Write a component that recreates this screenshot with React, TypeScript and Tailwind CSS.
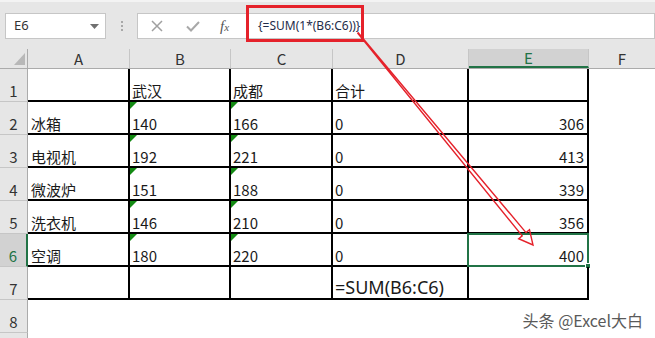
import React from "react";

const colW = ["w-[102px]", "w-[101px]", "w-[102px]", "w-[136px]", "w-[120px]"];

const rows: string[][] = [
  ["", "武汉", "成都", "合计", ""],
  ["冰箱", "140", "166", "0", "306"],
  ["电视机", "192", "221", "0", "413"],
  ["微波炉", "151", "188", "0", "339"],
  ["洗衣机", "146", "210", "0", "356"],
  ["空调", "180", "220", "0", "400"],
  ["", "", "", "=SUM(B6:C6)", ""],
];

function Tri() {
  return (
    <svg className="absolute left-0 top-0" width="7" height="7" viewBox="0 0 7 7">
      <polygon points="0,0 7,0 0,7" fill="#138a13" />
    </svg>
  );
}

function Cell({ r, c, v }: { r: number; c: number; v: string }) {
  const isE = c === 4;
  const hasTri = (c === 1 || c === 2) && r >= 1 && r <= 5;
  const isSel = r === 5 && c === 4;
  const isFormula = v.startsWith("=");
  return (
    <div
      className={`relative ${colW[c]} h-full shrink-0 border-r-2 border-b-2 border-black flex items-end pb-[2px] ${
        isE ? "justify-end pr-[3px]" : c === 0 ? "pl-[3px]" : "pl-[2px]"
      }`}
    >
      {hasTri && <Tri />}
      <span
        className={
          isFormula
            ? "text-[18px] leading-[18px] text-[#1a1a1a] font-['Noto_Sans','Noto_Sans_CJK_SC',sans-serif]"
            : "text-[15px] leading-[15px] text-[#1a1a1a]"
        }
      >
        {v}
      </span>
      {isSel && (
        <div className="absolute left-[-2px] top-[-1px] w-[122px] h-[34px] border-2 border-[#217346]">
          <div className="absolute right-[-4px] bottom-[-4px] w-[6px] h-[6px] bg-[#217346] border border-white" />
        </div>
      )}
    </div>
  );
}

export default function App() {
  const headers = ["A", "B", "C", "D", "E"];
  return (
    <div className="relative w-[655px] h-[338px] overflow-hidden bg-white font-['Noto_Sans_CJK_SC',sans-serif]">
      {/* Toolbar */}
      <div className="h-[49px] bg-[#e6e6e6] border-t-[2px] border-[#f3f3f3] flex items-start pt-[11px]">
        <div className="ml-[5px] w-[101px] h-[26px] bg-white border border-[#c6c6c6] flex items-center justify-between pl-[8px] pr-[6px]">
          <span className="text-[13px] text-[#333] font-['Noto_Sans',sans-serif]">E6</span>
          <svg width="9" height="5" viewBox="0 0 9 5">
            <polygon points="0,0 9,0 4.5,5" fill="#707070" />
          </svg>
        </div>
        <div className="w-[31px] h-[26px] flex flex-col items-center justify-center gap-[2px]">
          <div className="w-[2px] h-[2px] bg-[#a8a8a8]" />
          <div className="w-[2px] h-[2px] bg-[#a8a8a8]" />
          <div className="w-[2px] h-[2px] bg-[#a8a8a8]" />
        </div>
        <div className="w-[110px] h-[26px] bg-white border border-[#c6c6c6] flex items-center pl-[13px]">
          <svg width="12" height="12" viewBox="0 0 12 12">
            <path d="M1 1 L11 11 M11 1 L1 11" stroke="#a0a0a0" strokeWidth="1.5" />
          </svg>
          <svg className="ml-[23px]" width="14" height="11" viewBox="0 0 14 11">
            <path d="M1 5.5 L5 9.5 L13 1" stroke="#a8a8a8" strokeWidth="2" fill="none" />
          </svg>
          <span className="ml-[20px] text-[15px] italic text-[#555] font-['Liberation_Serif',serif] leading-none">
            f<span className="text-[11px]">x</span>
          </span>
        </div>
        <div className="flex-1 h-[26px] bg-white border border-[#c6c6c6] flex items-center pl-[10px]">
          <span className="text-[12px] text-[#1f2d4a] font-['Noto_Sans',sans-serif]">{"{=SUM(1*(B6:C6))}"}</span>
        </div>
      </div>

      {/* Column headers */}
      <div className="flex h-[20px] bg-[#e6e6e6] border-b border-[#ababab]">
        <div className="relative w-[28px] h-full border-r border-[#ababab] shrink-0">
          <svg className="absolute right-[2px] bottom-[3px]" width="11" height="12" viewBox="0 0 11 12">
            <polygon points="11,0 11,12 0,12" fill="#b8b8b8" />
          </svg>
        </div>
        {headers.map((h, i) => (
          <div
            key={h}
            className={`${colW[i]} shrink-0 h-full flex items-center justify-center pt-[1px] text-[15px] border-r border-[#c6c6c6] ${
              i === 4 ? "bg-[#d2d2d2] border-b-2 border-b-[#217346] text-[#217346]" : "text-[#333]"
            }`}
          >
            {h}
          </div>
        ))}
        <div className="flex-1 h-full flex items-center justify-center pt-[1px] text-[15px] text-[#333]">F</div>
      </div>

      {/* Rows */}
      {rows.map((row, r) => (
        <div key={r} className="flex h-[33px]">
          <div
            className={`w-[28px] shrink-0 h-full flex items-end justify-center pb-[3px] text-[15px] leading-[15px] border-b border-[#c6c6c6] ${
              r === 5
                ? "bg-[#d2d2d2] border-r-2 border-r-[#217346] text-[#217346]"
                : "bg-[#e6e6e6] border-r border-r-[#ababab] text-[#333]"
            }`}
          >
            {r + 1}
          </div>
          {row.map((v, c) => (
            <Cell key={c} r={r} c={c} v={v} />
          ))}
          <div className="flex-1" />
        </div>
      ))}
      <div className="flex h-[33px]">
        <div className="w-[28px] shrink-0 h-full flex items-end justify-center pb-[3px] text-[15px] leading-[15px] bg-[#e6e6e6] border-r border-[#ababab] border-b border-b-[#c6c6c6] text-[#333]">
          8
        </div>
      </div>
      <div className="flex h-[10px]">
        <div className="w-[28px] shrink-0 h-full bg-[#e6e6e6] border-r border-[#ababab]" />
      </div>

      {/* Red highlight box */}
      <div className="absolute left-[246px] top-[5px] w-[118px] h-[37px] border-[3px] border-[#e5222b]" />

      {/* Arrow */}
      <svg className="absolute left-0 top-0 pointer-events-none" width="655" height="338" viewBox="0 0 655 338">
        <polygon
          points="358.2,32.8 526.0,232.6 529.5,229.7 533,245 518.7,238.7 522.2,235.8 357.8,33.2"
          fill="none"
          stroke="#e5222b"
          strokeWidth="1.4"
          strokeLinejoin="miter"
        />
      </svg>

      {/* Watermark */}
      <div className="absolute right-[12px] top-[308px] whitespace-nowrap text-[16px] text-[#5a5a5a] [text-shadow:0_0_2px_#fff,0_0_2px_#fff]">
        头条 @Excel大白
      </div>
    </div>
  );
}
